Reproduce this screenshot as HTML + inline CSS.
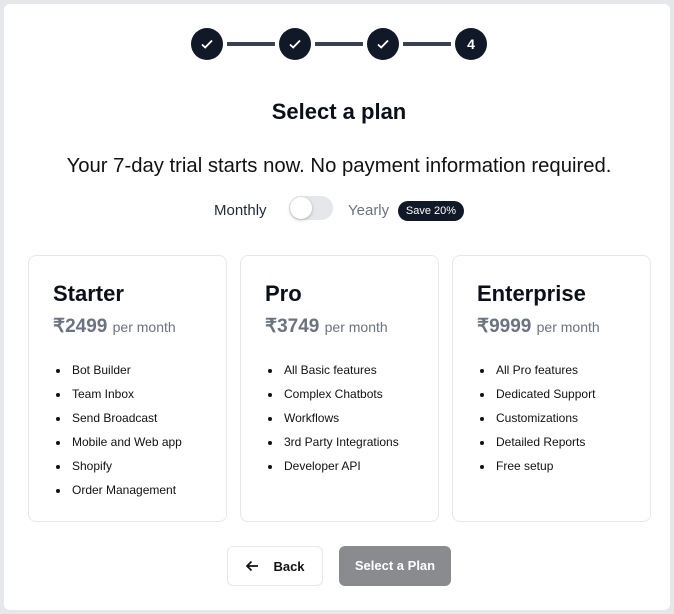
<!DOCTYPE html>
<html><head><style>
*{margin:0;padding:0;box-sizing:border-box}
body{width:674px;height:614px;background:#e5e7eb;font-family:"Liberation Sans",sans-serif;color:#111;position:relative;overflow:hidden}
.main{position:absolute;left:4px;top:4px;width:666px;height:606px;background:#fff;border-radius:6px}
.abs{position:absolute}
.c{position:absolute;top:28px;width:32px;height:32px;border-radius:50%;background:#111827;color:#fff;display:flex;align-items:center;justify-content:center;font-weight:bold;font-size:14px}
.ln{position:absolute;top:42px;height:4px;background:#374151}
.card{position:absolute;top:255px;width:199px;height:267px;border:1px solid #e5e7eb;border-radius:8px;background:#fff}
.card h2{position:absolute;left:24px;top:25px;font-size:22px;font-weight:bold;color:#0b0f19}
.card .p{position:absolute;left:24px;top:59px;font-size:19px;font-weight:bold;color:#6b7280;white-space:nowrap}
.card .p span{font-size:14px;font-weight:normal}
.card ul{position:absolute;left:41px;top:102px;list-style:disc;font-size:12px;line-height:24px;color:#111}
.card li{padding-left:2px}
</style></head><body>
<div class="main"></div>
<div class="ln" style="left:227px;width:48px"></div>
<div class="ln" style="left:315px;width:48px"></div>
<div class="ln" style="left:403px;width:48px"></div>
<div class="c" style="left:191px"><svg width="14" height="14" viewBox="0 0 14 14"><path d="M2 7.5l3.2 3L12 3.5" stroke="#fff" stroke-width="1.8" fill="none"/></svg></div>
<div class="c" style="left:279px"><svg width="14" height="14" viewBox="0 0 14 14"><path d="M2 7.5l3.2 3L12 3.5" stroke="#fff" stroke-width="1.8" fill="none"/></svg></div>
<div class="c" style="left:367px"><svg width="14" height="14" viewBox="0 0 14 14"><path d="M2 7.5l3.2 3L12 3.5" stroke="#fff" stroke-width="1.8" fill="none"/></svg></div>
<div class="c" style="left:455px">4</div>
<div class="abs" style="left:0;width:678px;top:99px;text-align:center;font-size:22px;font-weight:bold;color:#0b0f19">Select a plan</div>
<div class="abs" style="left:0;width:678px;top:155px;text-align:center;font-size:20.3px;color:#111">Your 7-day trial starts now. No payment information required.</div>
<div class="abs" style="left:214px;top:202px;font-size:15px;color:#1f2937">Monthly</div>
<div class="abs" style="left:289px;top:196px;width:44px;height:24px;border-radius:12px;background:#e5e7eb"></div>
<div class="abs" style="left:290px;top:197px;width:22px;height:22px;border-radius:50%;background:#fff;box-shadow:0 1px 3px rgba(0,0,0,.25)"></div>
<div class="abs" style="left:348px;top:202px;font-size:15px;color:#6b7280">Yearly</div>
<div class="abs" style="left:398px;top:201px;width:66px;height:20px;border-radius:10px;background:#111827;color:#fff;font-size:11px;line-height:20px;text-align:center">Save 20%</div>
<div class="card" style="left:28px"><h2>Starter</h2><div class="p">₹2499 <span>per month</span></div>
<ul><li>Bot Builder</li><li>Team Inbox</li><li>Send Broadcast</li><li>Mobile and Web app</li><li>Shopify</li><li>Order Management</li></ul></div>
<div class="card" style="left:240px"><h2>Pro</h2><div class="p">₹3749 <span>per month</span></div>
<ul><li>All Basic features</li><li>Complex Chatbots</li><li>Workflows</li><li>3rd Party Integrations</li><li>Developer API</li></ul></div>
<div class="card" style="left:452px"><h2>Enterprise</h2><div class="p">₹9999 <span>per month</span></div>
<ul><li>All Pro features</li><li>Dedicated Support</li><li>Customizations</li><li>Detailed Reports</li><li>Free setup</li></ul></div>
<div class="abs" style="left:227px;top:546px;width:96px;height:40px;border:1px solid #e5e7eb;border-radius:6px;background:#fff;display:flex;align-items:center;justify-content:center;gap:14px;font-size:13px;font-weight:bold;color:#111">
<svg width="14" height="12" viewBox="0 0 14 12"><path d="M13 6H2M6.5 1.5L2 6l4.5 4.5" stroke="#111" stroke-width="1.7" fill="none"/></svg>Back</div>
<div class="abs" style="left:339px;top:546px;width:112px;height:40px;border-radius:6px;background:#898b8f;color:#fff;font-size:13px;font-weight:bold;line-height:40px;text-align:center">Select a Plan</div>
</body></html>
